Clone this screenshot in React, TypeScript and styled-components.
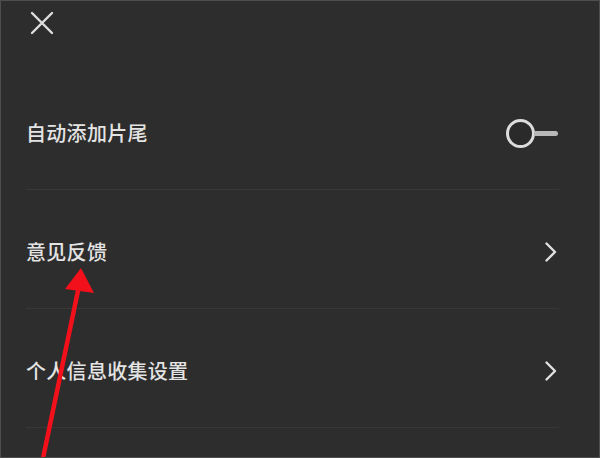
import React from 'react';
import styled, { createGlobalStyle } from 'styled-components';

const GlobalStyle = createGlobalStyle`
  html, body {
    margin: 0;
    padding: 0;
    background: #2d2d2d;
  }
  * {
    box-sizing: border-box;
  }
`;

const Screen = styled.div`
  position: relative;
  width: 600px;
  height: 458px;
  overflow: hidden;
  background: #2d2d2d;
  border: 1px solid #4e4e4e;
  font-family: "Noto Sans CJK SC", "Noto Sans", sans-serif;
  color: #e4e4e4;
`;

const Header = styled.header`
  height: 70px;
  display: flex;
  align-items: flex-start;
  padding: 9px 0 0 28px;
`;

const CloseButton = styled.button`
  display: flex;
  align-items: center;
  justify-content: center;
  width: 26px;
  height: 26px;
  padding: 0;
  border: none;
  background: none;
  cursor: pointer;
`;

const List = styled.ul`
  list-style: none;
  margin: 0;
  padding: 0 40px 0 25px;
`;

const Row = styled.li`
  height: 119px;
  padding-top: 6px;
  display: flex;
  align-items: center;
  justify-content: space-between;
  border-bottom: 1px solid #383838;
`;

const Label = styled.span`
  font-size: 20px;
  font-weight: 500;
  letter-spacing: 0.3px;
  line-height: 1;
`;

const Toggle = styled.div`
  display: flex;
  align-items: center;
  margin-right: 1px;
`;

const Knob = styled.span`
  width: 29px;
  height: 29px;
  border-radius: 50%;
  border: 3px solid #dcdcdc;
  background: #2a2a2a;
`;

const Track = styled.span`
  width: 24px;
  height: 5px;
  border-radius: 0 3px 3px 0;
  background: #b8b8b8;
  margin-left: -1px;
`;

const Chevron = styled.span`
  display: flex;
  margin-right: 1px;
`;

const Annotation = styled.svg`
  position: absolute;
  left: 0;
  top: 0;
  pointer-events: none;
`;

const rows = [
  { label: '自动添加片尾', kind: 'toggle' },
  { label: '意见反馈', kind: 'link' },
  { label: '个人信息收集设置', kind: 'link' },
];

export default function App() {
  return (
    <>
      <GlobalStyle />
      <Screen>
        <Header>
          <CloseButton aria-label="关闭">
            <svg width="24" height="24" viewBox="0 0 24 24">
              <path d="M2 2 L22 22 M22 2 L2 22" stroke="#dedede" strokeWidth="2.4" strokeLinecap="round" />
            </svg>
          </CloseButton>
        </Header>
        <List>
          {rows.map(r => (
            <Row key={r.label}>
              <Label>{r.label}</Label>
              {r.kind === 'toggle' ? (
                <Toggle>
                  <Knob />
                  <Track />
                </Toggle>
              ) : (
                <Chevron>
                  <svg width="14" height="22" viewBox="0 0 14 22">
                    <path d="M2.5 2.5 L11 11 L2.5 19.5" fill="none" stroke="#e0e0e0" strokeWidth="2.4" strokeLinecap="round" strokeLinejoin="round" />
                  </svg>
                </Chevron>
              )}
            </Row>
          ))}
        </List>
        <Annotation width="600" height="458" viewBox="0 0 600 458">
          <path d="M41 462 L78 285" stroke="#f2101a" strokeWidth="4.5" strokeLinecap="round" />
          <path d="M80 267 L64 288 L93 292 Z" fill="#f2101a" />
        </Annotation>
      </Screen>
    </>
  );
}
